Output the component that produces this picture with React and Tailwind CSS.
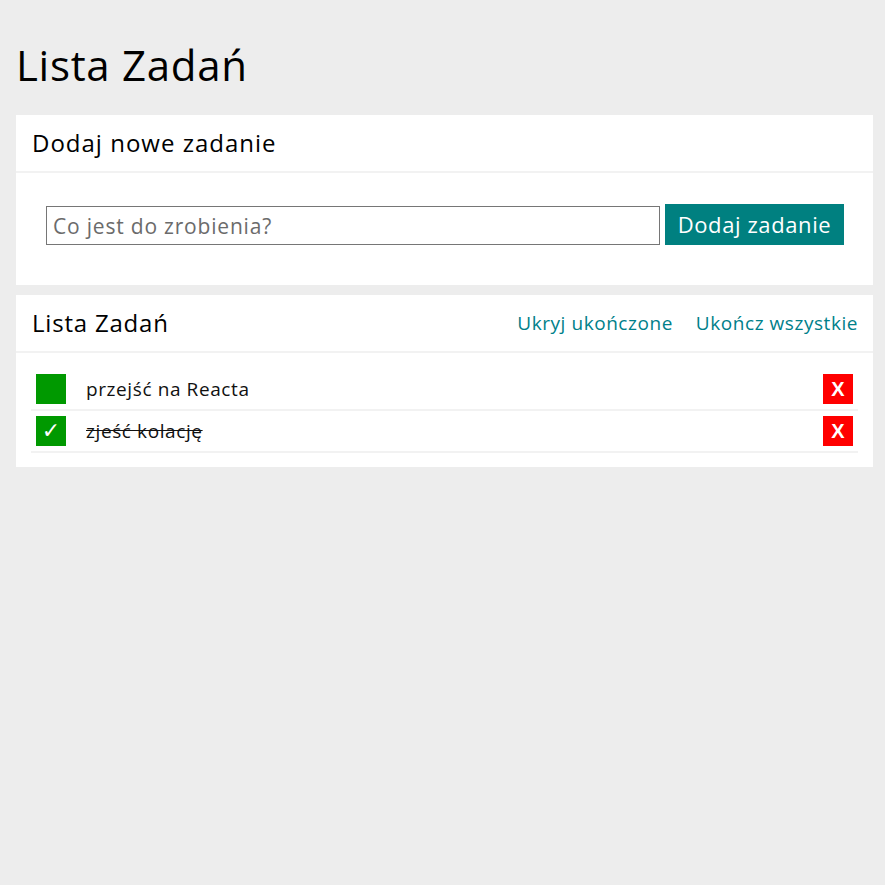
import { useState } from "react";

const tasks = [
  { id: 1, text: "przejść na Reacta", done: false },
  { id: 2, text: "zjeść kolację", done: true },
];

function TaskRow({ task }) {
  return (
    <li className="flex items-center py-[5px] border-b-2 border-[#f2f2f2]">
      <span className="ml-[5px] w-[30px] h-[30px] bg-[#009900] text-white flex items-center justify-center text-[22px] font-bold leading-none font-['DejaVu_Sans',sans-serif]">
        {task.done ? "✓" : ""}
      </span>
      <span
        className={
          "ml-5 flex-1 text-[19px] tracking-[0.6px] text-[#111] " + (task.done ? "line-through" : "")
        }
      >
        {task.text}
      </span>
      <button className="mr-[5px] w-[30px] h-[30px] bg-[#ff0000] text-white font-bold text-[20px] leading-none flex items-center justify-center font-['Liberation_Sans',sans-serif]">
        X
      </button>
    </li>
  );
}

export default function App() {
  const [value, setValue] = useState("");
  return (
    <div className="min-h-screen bg-[#ededed] font-['Open_Sans',sans-serif] text-black pt-[30px] pl-4 pr-3">
      <h1 className="text-[42px] tracking-[0.7px] leading-[70px]">Lista Zadań</h1>

      <section className="mt-[15px] bg-white">
        <div className="h-[58px] flex items-center px-4 border-b-2 border-[#f2f2f2]">
          <h2 className="text-[24px] tracking-[1px]">Dodaj nowe zadanie</h2>
        </div>
        <div className="flex items-end gap-[5px] pt-[31px] pb-[40px] pl-[30px] pr-[29px]">
          <input
            value={value}
            onChange={(e) => setValue(e.target.value)}
            placeholder="Co jest do zrobienia?"
            className="flex-1 h-[39px] border border-[#767676] px-[6px] text-[21px] tracking-[0.8px] placeholder:text-[#6b6b6b] outline-none"
          />
          <button className="w-[179px] h-[41px] bg-[#008080] text-white text-[22px] tracking-[0.6px]">
            Dodaj zadanie
          </button>
        </div>
      </section>

      <section className="mt-[10px] bg-white">
        <div className="h-[58px] flex items-center justify-between pl-4 pr-[15px] border-b-2 border-[#f2f2f2]">
          <h2 className="text-[24px] tracking-[0.8px]">Lista Zadań</h2>
          <div className="flex gap-[23px] text-[19px] tracking-[0.55px] text-[#00808a]">
            <a href="#">Ukryj ukończone</a>
            <a href="#">Ukończ wszystkie</a>
          </div>
        </div>
        <ul className="mx-[15px] pt-4 pb-[14px]">
          {tasks.map((t) => (
            <TaskRow key={t.id} task={t} />
          ))}
        </ul>
      </section>
    </div>
  );
}
